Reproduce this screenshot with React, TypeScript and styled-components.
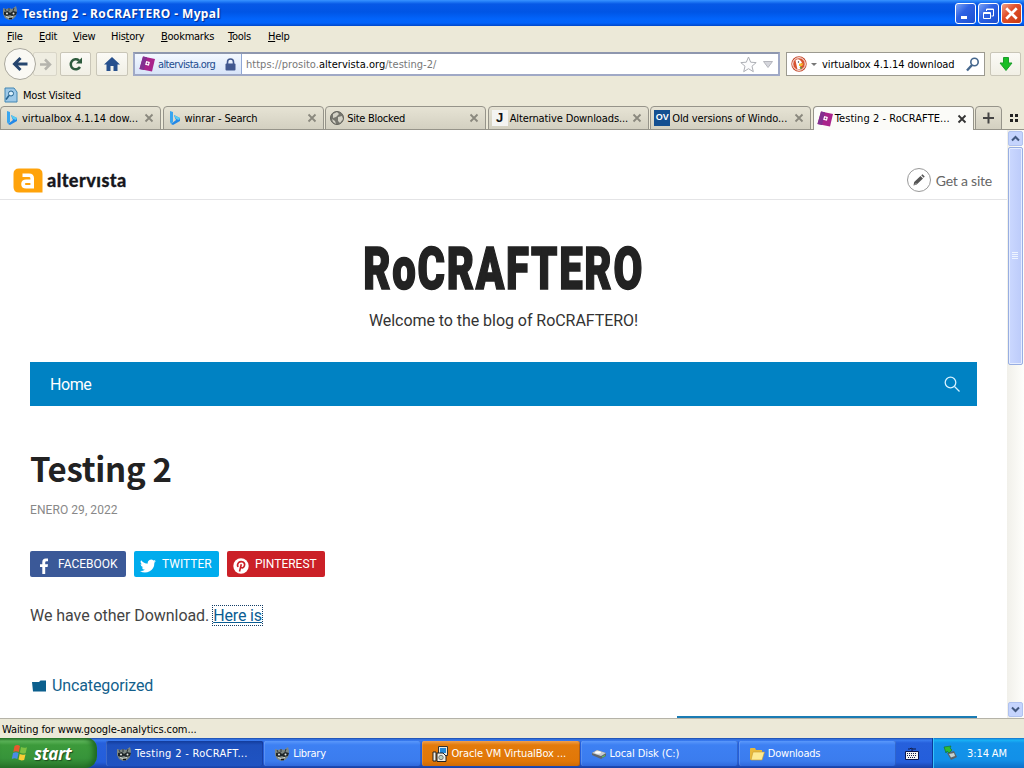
import { FunctionComponent, ReactNode } from "react";
import styled, { createGlobalStyle, css } from "styled-components";

const GlobalStyle = createGlobalStyle`
  * { box-sizing: border-box; }
  body {
    margin: 0;
    overflow: hidden;
    background: #fff;
  }
  svg { display: block; flex: none; }
`;

const Screen = styled.div`
  width: 1024px;
  height: 768px;
  display: flex;
  flex-direction: column;
  overflow: hidden;
  font-family: "DejaVu Sans Condensed", "DejaVu Sans", sans-serif;
  font-stretch: condensed;
  font-size: 11px;
  color: #000;
`;

const Label = styled.span<{ spacing?: number }>`
  white-space: nowrap;
  letter-spacing: ${(props) => props.spacing ?? -0.3}px;
`;

/* ---------- window chrome ---------- */

const TitleBar = styled.div`
  flex: none;
  height: 26px;
  padding: 0 2px 0 2px;
  display: flex;
  align-items: center;
  background: linear-gradient(#3a93ff 0, #2a86fb 1px, #0759e6 4px, #0055e5 12px, #0264fb 19px, #0263fa 23px, #0047c9 26px);
`;

const WindowTitle = styled.div`
  flex: 1;
  margin-left: 4px;
  font: bold 12px "Noto Sans", sans-serif;
  letter-spacing: 0.38px;
  white-space: nowrap;
  color: #fff;
  text-shadow: 1px 1px 1px #0b2b8c;
`;

const WindowButtons = styled.div`
  display: flex;
  gap: 2px;
`;

const WindowButton = styled.div<{ close?: boolean }>`
  width: 21px;
  height: 21px;
  display: flex;
  align-items: center;
  justify-content: center;
  border: 1px solid #fff;
  border-radius: 3px;
  background: ${(props) =>
    props.close
      ? "linear-gradient(135deg, #f0a38a, #e2502c 40%, #c63a12)"
      : "linear-gradient(135deg, #7ba3f5, #2e62e4 40%, #1c4fd0)"};
`;

const MenuBar = styled.div`
  flex: none;
  height: 21px;
  padding: 0 7px;
  display: flex;
  align-items: center;
  background: #ece9d8;
`;

const MenuItem = styled.div<{ width: number }>`
  width: ${(props) => props.width}px;
  white-space: nowrap;
  letter-spacing: -0.25px;
`;

const NavBar = styled.div`
  flex: none;
  height: 37px;
  padding: 0 2px 3px 4px;
  display: flex;
  align-items: center;
  background: #ece9d8;
`;

const BackButton = styled.div`
  z-index: 1;
  width: 32px;
  height: 32px;
  display: flex;
  align-items: center;
  justify-content: center;
  border: 1px solid #aaa89d;
  border-radius: 50%;
  background: #faf9f4;
`;

const ToolButton = styled.div<{ width: number; left?: number; faded?: boolean }>`
  width: ${(props) => props.width}px;
  height: 24px;
  margin-left: ${(props) => props.left ?? 0}px;
  display: flex;
  align-items: center;
  justify-content: center;
  border: 1px solid ${(props) => (props.faded ? "#d9d6c8" : "#c9c6b8")};
  border-radius: 2px;
  background: ${(props) => (props.faded ? "#efede1" : "linear-gradient(#fbfaf6, #f1efe5)")};
`;

const UrlBar = styled.div`
  width: 647px;
  height: 24px;
  margin-left: 5px;
  display: flex;
  align-items: center;
  border: 2px solid #a0a9c6;
  border-top-color: #8e97ae;
  background: #fff;
`;

const Identity = styled.div`
  width: 107px;
  height: 20px;
  padding-left: 4px;
  display: flex;
  align-items: center;
  border-right: 1px solid #8fa6d4;
  background: linear-gradient(#f3f8ff, #d8e4f8);
  color: #1d4c8f;
`;

const IdentityText = styled(Label)`
  flex: 1;
  margin-left: 3px;
`;

const LockIcon = styled.svg`
  margin-right: 5px;
`;

const Address = styled.div`
  flex: 1;
  padding: 1px 0 0 4px;
  white-space: nowrap;
  letter-spacing: 0.03px;
  color: #777;
  b {
    font-weight: normal;
    color: #000;
  }
`;

const SearchBox = styled.div`
  width: 199px;
  height: 24px;
  margin: 0 5px 0 6px;
  padding: 0 4px 0 4px;
  display: flex;
  align-items: center;
  border: 1px solid #9c9a90;
  background: #fff;
`;

const Query = styled(Label)`
  flex: 1;
  padding-top: 1px;
`;

const BookmarksBar = styled.div`
  flex: none;
  height: 22px;
  padding-left: 4px;
  display: flex;
  align-items: center;
  gap: 4px;
  background: #ece9d8;
`;

const TabStrip = styled.div`
  flex: none;
  height: 24px;
  display: flex;
  gap: 1.6px;
  background: #ece9d8;
  border-bottom: 1px solid #96948a;
`;

const TabBox = styled.div<{ active?: boolean; width?: number }>`
  width: ${(props) => props.width ?? 161}px;
  height: 24px;
  padding: 0 6px 0 3px;
  display: flex;
  align-items: center;
  border: 1px solid #96948a;
  border-bottom: 0;
  border-radius: 4px 4px 0 0;
  ${(props) =>
    props.active
      ? css`
          background: #fbfbf8;
        `
      : css`
          background: linear-gradient(#e6e3d4, #d3d0c1);
          border-bottom: 1px solid #96948a;
        `}
`;

const TabText = styled(Label)`
  flex: 1;
  margin-left: 2px;
`;

/* ---------- web page ---------- */

const Viewport = styled.div`
  flex: none;
  height: 588px;
  display: flex;
  background: #fff;
`;

const Page = styled.div`
  width: 1007px;
  height: 588px;
  display: flex;
  flex-direction: column;
  overflow: hidden;
  font-family: Roboto, sans-serif;
  font-stretch: normal;
`;

const HostBar = styled.div`
  flex: none;
  height: 70px;
  padding: 31px 15px 0 13px;
  display: flex;
  align-items: center;
  border-bottom: 1px solid #e4e4e6;
`;

const HostName = styled.div`
  flex: 1;
  margin-left: 4px;
  font: 900 18px Lato, sans-serif;
  letter-spacing: 0.45px;
  color: #17171c;
  -webkit-text-stroke: 0.3px #17171c;
`;

const PencilRing = styled.div`
  width: 24px;
  height: 24px;
  display: flex;
  align-items: center;
  justify-content: center;
  border: 1px solid #999;
  border-radius: 50%;
`;

const GetSite = styled.div`
  margin: 1px 0 0 5px;
  font: 14px Lato, sans-serif;
  letter-spacing: -0.22px;
  white-space: nowrap;
  color: #666;
`;

const SiteHeader = styled.header`
  flex: none;
  height: 162px;
  padding-top: 34px;
  display: flex;
  flex-direction: column;
  align-items: center;
`;

const SiteTitle = styled.h1`
  margin: 0;
  font: 900 59px/70px Roboto, sans-serif;
  transform: scaleX(0.71);
  letter-spacing: 2.4px;
  -webkit-text-stroke: 1.6px #222;
  white-space: nowrap;
  color: #222;
`;

const Tagline = styled.div`
  margin-top: 5px;
  font-size: 16px;
  line-height: 24px;
  letter-spacing: -0.05px;
  color: #333;
`;

const SiteNav = styled.nav`
  flex: none;
  height: 44px;
  margin: 0 30px;
  padding: 0 17px 0 20px;
  display: flex;
  align-items: center;
  justify-content: space-between;
  background: #0082c3;
  color: #fff;
  font-size: 16px;
  letter-spacing: -0.4px;
`;

const Article = styled.article`
  flex: 1;
  padding: 36px 30px 0;
`;

const PostTitle = styled.h2`
  margin: 0;
  font: bold 33px/52px "Noto Sans CJK SC", sans-serif;
  letter-spacing: -0.3px;
  color: #222;
`;

const PostDate = styled.div`
  margin-top: 7px;
  font-size: 12px;
  line-height: 18px;
  letter-spacing: 0.07px;
  color: #888;
`;

const ShareRow = styled.div`
  margin-top: 32px;
  display: flex;
  gap: 8px;
`;

const ShareButton = styled.div<{ color: string; width: number }>`
  width: ${(props) => props.width}px;
  height: 26px;
  padding-left: 6px;
  display: flex;
  align-items: center;
  gap: 6px;
  border-radius: 2px;
  background: ${(props) => props.color};
  color: #fff;
  font-size: 12px;
  svg { margin-top: 3px; }
`;

const Paragraph = styled.p`
  margin: 27px 0 0;
  font-size: 16px;
  line-height: 24px;
  letter-spacing: -0.05px;
  color: #444;
  a {
    color: #0a5c92;
    text-decoration: underline;
    outline: 1px dotted #123c66;
    letter-spacing: -0.15px;
  }
`;

const Category = styled.div`
  margin: 46px 0 0 2px;
  display: flex;
  align-items: center;
  gap: 5px;
  font-size: 16px;
  line-height: 24px;
  letter-spacing: -0.12px;
  color: #135f8c;
`;

const WidgetEdge = styled.div`
  flex: none;
  width: 300px;
  height: 2px;
  margin-left: 677px;
  background: #1a7cb4;
`;

const ScrollTrack = styled.div`
  width: 17px;
  padding: 1px;
  display: flex;
  flex-direction: column;
  background: linear-gradient(90deg, #f1f0ea, #fefefb);
`;

const ScrollButton = styled.div`
  width: 15px;
  height: 15px;
  display: flex;
  align-items: center;
  justify-content: center;
  border: 1px solid #b0c2ef;
  border-radius: 2px;
  background: #c5d4fd;
`;

const ScrollThumb = styled.div`
  width: 15px;
  height: 218px;
  margin: 1px 0 auto;
  display: flex;
  align-items: center;
  justify-content: center;
  border: 1px solid #98aee2;
  border-radius: 2px;
  box-shadow: inset 0 0 0 1px #e6edff;
  background: linear-gradient(90deg, #cbd8ff, #bccbfa);
`;

/* ---------- status bar and taskbar ---------- */

const StatusBar = styled.div`
  flex: none;
  height: 20px;
  padding: 1px 2px 0;
  display: flex;
  align-items: center;
  border-top: 1px solid #b5b3a8;
  background: #ece9d8;
`;

const Taskbar = styled.div`
  flex: none;
  height: 30px;
  display: flex;
  align-items: stretch;
  color: #fff;
  background: linear-gradient(#1b4aa8 0, #3a7cf0 2px, #2660dc 5px, #245edb 24px, #1941a5 30px);
`;

const StartButton = styled.div`
  width: 97px;
  padding-left: 11px;
  display: flex;
  align-items: center;
  gap: 5px;
  border-radius: 0 10px 12px 0;
  background: linear-gradient(#2b7a2c 0, #5eb75b 3px, #3c9a3b 7px, #37943a 20px, #2a752b 30px);
  box-shadow: inset -4px 0 5px #1f6a22;
  font: italic bold 17px "Open Sans", sans-serif;
  letter-spacing: -0.4px;
  text-shadow: 1px 1px 1px #1c4a1d;
`;

const Tasks = styled.div`
  width: 790px;
  margin-left: 9px;
  padding: 3px 0 2px;
  display: flex;
  gap: 1px;
`;

const taskFill = {
  normal: "linear-gradient(#5a98fb, #3d80f3 4px, #3b7cee 20px, #3069dc)",
  active: "linear-gradient(#123c9c, #1e50bc 4px, #1f53c2)",
  alert: "linear-gradient(#f0a04c, #e37b0c 4px, #e17707 20px, #cf6a05)",
};

const TaskButton = styled.div<{ kind: keyof typeof taskFill }>`
  width: 157.2px;
  padding-left: 10px;
  display: flex;
  align-items: center;
  gap: 3px;
  border-radius: 2px;
  background: ${(props) => taskFill[props.kind]};
  box-shadow: inset 1px 0 0 rgba(255, 255, 255, 0.15), inset -1px 0 0 rgba(0, 0, 60, 0.2);
`;

const LanguageBar = styled.div`
  width: 36px;
  padding-right: 4px;
  display: flex;
  align-items: center;
  justify-content: center;
`;

const Tray = styled.div`
  flex: 1;
  padding-left: 10px;
  display: flex;
  align-items: center;
  gap: 9px;
  border-left: 1px solid #0b3a9a;
  background: linear-gradient(#1570c8 0, #19b3f5 2px, #1294ea 5px, #1290e8 22px, #0d6fc8 30px);
  box-shadow: inset 1px 0 0 #38c4fa;
`;

/* ---------- icons ---------- */

const Raccoon = () => (
  <svg width="16" height="16" viewBox="0 0 16 16">
    <path d="M1 3l3 1 3-1 3 1 4-3 1 4-1 6-3 3-4 1-4-2-2-4z" fill="#7d8783" />
    <path d="M2 7l4-1 2 2 3-2 4 1-1 3-4 1-2-1-3 1-3-1z" fill="#20272a" />
    <path d="M3 4l1 2M7 3v3M12 3l-1 3" stroke="#2f373a" />
    <circle cx="5" cy="8.5" r="1" fill="#e4e8e4" />
    <circle cx="11.500" cy="8.500" r="1" fill="#e4e8e4" />
    <path d="M4 11.500l3 1 4-1" stroke="#d5dbd5" fill="none" />
    <path d="M7 13.500h3" stroke="#111" strokeWidth="1.500" />
  </svg>
);

const Alter = () => (
  <svg width="16" height="16" viewBox="0 0 16 16">
    <path d="M4 .5l12 2.500-3 12.500L.5 13z" fill="#a9238b" />
    <path d="M4 .5l4 .8L5 14 .5 13z" fill="#823090" />
    <path d="M7.200 5l3.700 1-1 3.800-3.800-1z" fill="#fff" />
    <circle cx="8.500" cy="7.400" r=".8" fill="#93308a" />
  </svg>
);

const Bing = () => (
  <svg width="16" height="16" viewBox="0 0 16 16">
    <path d="M3 1l3 1v10l-2 2-1-2z" fill="#38a5ef" />
    <path d="M7 5l6 3v3l-7 4-2-1 5-4-1-2z" fill="#2188e8" />
    <path d="M7 5l6 3-1 2-3-1z" fill="#59cdf1" />
  </svg>
);

const Globe = () => (
  <svg width="16" height="16" viewBox="0 0 16 16">
    <circle cx="8" cy="8" r="6.5" fill="#77776f" stroke="#62625b" />
    <path d="M4 4l4-2 2 2-3 3-3 1zM9 7l4-1 1 3-3 4-2-2zM3 9l3 2 1 3-3-2z" fill="#d4d2c6" />
  </svg>
);

const LetterIcon = styled.div<{ blue?: boolean }>`
  width: 16px;
  height: 16px;
  flex: none;
  text-align: center;
  background: ${(props) => (props.blue ? "#134f91" : "#f4f4f2")};
  color: ${(props) => (props.blue ? "#fff" : "#111")};
  font: bold ${(props) => (props.blue ? 9 : 13)}px/15px "Liberation Sans", sans-serif;
`;

const Cross: FunctionComponent<{ color: string; size?: number }> = ({ color, size = 10 }) => (
  <svg width={size} height={size} viewBox="0 0 10 10">
    <path d="M1.5 1.5l7 7M8.5 1.5l-7 7" stroke={color} strokeWidth="1.8" />
  </svg>
);

const Magnifier = () => (
  <svg width="15" height="15" viewBox="0 0 15 15" fill="none">
    <circle cx="9.5" cy="5" r="3.7" stroke="#45678d" strokeWidth="1.6" />
    <path d="M7 8l-5 5.5" stroke="#45678d" strokeWidth="2.4" />
  </svg>
);

const Duck = () => (
  <svg width="16" height="16" viewBox="0 0 16 16">
    <circle cx="8" cy="8" r="7.7" fill="#c54a2c" />
    <circle cx="8" cy="8" r="6.3" fill="#d85331" stroke="#fff" />
    <path d="M4.500 4.500q2-2 4.500-.5l2 2.500-2 2 .5 4.500-3 .5z" fill="#fff" />
    <path d="M8 7.500h4.500l-1.500 2.500H8z" fill="#f8b92a" />
    <path d="M8.500 11l3 .5-2 1.500z" fill="#49a942" />
    <circle cx="7.500" cy="6" r="0.7" fill="#234" />
  </svg>
);

const Chevron: FunctionComponent<{ down?: boolean }> = ({ down }) => (
  <svg width="9" height="7" viewBox="0 0 9 7">
    <path d={down ? "M1 1.5L4.5 5 8 1.5" : "M1 5.5L4.5 2 8 5.5"} fill="none" stroke="#42587f" strokeWidth="2" />
  </svg>
);

const Flag = () => (
  <svg width="18" height="18" viewBox="0 0 18 18">
    <path d="M3.500 2q3-1.800 5.500 0L7.800 8q-3-1.500-5.500 0z" fill="#e8582e" />
    <path d="M10 3q3 1.500 6 .3L14.700 9q-3 1.200-5.800-.4z" fill="#7cc142" />
    <path d="M2 9q3-1.500 5.500 0L6.300 15q-2.800-1.600-5.500 0z" fill="#4b8be6" />
    <path d="M8.700 10q3 1.500 5.800.3L13.200 16q-3 1-5.700-.4z" fill="#f8cd35" />
  </svg>
);

const Installer = () => (
  <svg width="16" height="16" viewBox="0 0 16 16">
    <path d="M6.500 .500h9v9h-9z" fill="#e8e8e0" stroke="#333" />
    <path d="M8 2h6v5H8z" fill="#2389d8" />
    <path d="M1 6h3v9H1z" fill="#f5f3e8" stroke="#222" />
    <path d="M5 7h6l3 3v5.500H5z" fill="#f2f0e5" stroke="#222" />
    <circle cx="9" cy="11.500" r="2.200" fill="#b9d1bd" stroke="#777" />
  </svg>
);

const Disk = () => (
  <svg width="16" height="16" viewBox="0 0 16 16">
    <path d="M1 7l5-3 9 3v3l-5 3-9-4z" fill="#5f666f" />
    <path d="M1 7l5-3 9 3-5 3z" fill="#c9cdd2" />
    <ellipse cx="7" cy="6.500" rx="3" ry="1.300" fill="#fff" />
    <path d="M11 11l3-1.500" stroke="#5ad15c" />
  </svg>
);

const Folder = () => (
  <svg width="16" height="16" viewBox="0 0 16 16">
    <path d="M1 3q0-1 1-1h4l1 2h6v10H2q-1 0-1-1z" fill="#e8b93c" />
    <path d="M4 6h11.500L13 14H2z" fill="#fdea93" stroke="#c99a2c" strokeWidth=".6" />
  </svg>
);

const Keyboard = () => (
  <svg width="14" height="13" viewBox="0 0 14 13">
    <path d="M3 2h2l1-1 2 1h3M7 2v3" stroke="#111a44" fill="none" />
    <path d="M.5 4.500h13v8H.5z" fill="#f4f4f4" stroke="#0a154d" />
    <path d="M2 6.500h10M2 8.500h10M3 10.500h8" stroke="#17204f" strokeDasharray="1 1" />
  </svg>
);

const TrayDevice = () => (
  <svg width="15" height="16" viewBox="0 0 15 16">
    <path d="M4 8l7-2 3 6-6 3z" fill="#59636a" />
    <path d="M6 9l5-1 1 3-4 1.500z" fill="#c7d1d0" />
    <path d="M1 2l7-1-1 2 2 2-3 3-2-2-1 2z" fill="#2ebc30" stroke="#176d25" strokeWidth=".6" />
  </svg>
);

interface TabProps {
  icon: ReactNode;
  title: string;
  active?: boolean;
  spacing?: number;
}

const Tab: FunctionComponent<TabProps> = ({ icon, title, active, spacing }) => (
  <TabBox active={active}>
    {icon}
    <TabText spacing={spacing}>{title}</TabText>
    <Cross color={active ? "#333" : "#8a887e"} />
  </TabBox>
);

const menus = [
  ["File", 32],
  ["Edit", 34],
  ["View", 38],
  ["History", 50, 3],
  ["Bookmarks", 67],
  ["Tools", 40],
  ["Help", 40],
] as [string, number, number?][];

const BrowserChrome = () => (
  <>
    <TitleBar>
      <Raccoon />
      <WindowTitle>Testing 2 - RoCRAFTERO - Mypal</WindowTitle>
      <WindowButtons>
        <WindowButton>
          <svg width="15" height="15"><path d="M3 10h6v3H3z" fill="#fff" /></svg>
        </WindowButton>
        <WindowButton>
          <svg width="15" height="15" fill="none" stroke="#fff">
            <path d="M5.500 5V3h7v7h-2M5 3.500h8" />
            <path d="M2.500 6.500h7v6h-7zM2 7.500h8" />
          </svg>
        </WindowButton>
        <WindowButton close>
          <Cross color="#fff" size={15} />
        </WindowButton>
      </WindowButtons>
    </TitleBar>
    <MenuBar>
      {menus.map(([name, width, key = 0]) => (
        <MenuItem key={name} width={width}>
          {name.slice(0, key)}
          <u>{name[key]}</u>
          {name.slice(key + 1)}
        </MenuItem>
      ))}
    </MenuBar>
    <NavBar>
      <BackButton>
        <svg width="16" height="16" fill="none" stroke="#26466f" strokeWidth="3">
          <path d="M8.500 2L2.500 8l6 6M3 8h12.500" />
        </svg>
      </BackButton>
      <ToolButton width={24} left={-3} faded>
        <svg width="13" height="13" fill="none" stroke="#b5b4ad" strokeWidth="2.500">
          <path d="M6 1.500l5 5-5 5M1 6.500h9" />
        </svg>
      </ToolButton>
      <ToolButton width={31} left={3}>
        <svg width="15" height="15" fill="none">
          <path d="M11 3.500A5 5 0 1 0 12 10" stroke="#2d5a3c" strokeWidth="2.500" />
          <path d="M8 6.500h6V.500z" fill="#2d5a3c" />
        </svg>
      </ToolButton>
      <ToolButton width={32} left={5}>
        <svg width="16" height="14" viewBox="0 0 16 14">
          <path d="M8 0l8 7.500h-2.500V14H9.500V9h-3v5H2.500V7.500H0z" fill="#27508d" />
        </svg>
      </ToolButton>
      <UrlBar>
        <Identity>
          <Alter />
          <IdentityText spacing={-0.62}>altervista.org</IdentityText>
          <LockIcon width="11" height="13" viewBox="0 0 11 13">
            <path d="M2.500 6V4q0-3 3-3t3 3v2" fill="none" stroke="#42588f" strokeWidth="1.600" />
            <rect x=".5" y="5.500" width="10" height="7" rx="1" fill="#42588f" />
          </LockIcon>
        </Identity>
        <Address>
          https://prosito.<b>altervista.org</b>/testing-2/
        </Address>
        <svg width="17" height="17" viewBox="0 0 17 17">
          <path d="M8.500 1l2.200 5.200 5.500.4-4.200 3.600 1.300 5.500-4.800-3-4.800 3L5 10.200.8 6.600l5.500-.4z" fill="#fcfcfd" stroke="#adafb5" />
        </svg>
        <svg width="21" height="9"><path d="M6.500 1.500h9L11 7.500z" fill="#d5d6dc" stroke="#b5b6bd" /></svg>
      </UrlBar>
      <SearchBox>
        <Duck />
        <svg width="15" height="5"><path d="M4 1h6L7 4z" fill="#777" /></svg>
        <Query spacing={-0.1}>virtualbox 4.1.14 download</Query>
        <Magnifier />
      </SearchBox>
      <ToolButton width={31}>
        <svg width="14" height="14"><path d="M4.500.500h5V6H13l-6 7.500L1 6h3.500z" fill="#18be25" stroke="#1a9d2b" /></svg>
      </ToolButton>
    </NavBar>
    <BookmarksBar>
      <svg width="15" height="16" viewBox="0 0 15 16">
        <path d="M1 1h9l3 4v10H1z" fill="#9dc9e8" stroke="#4386b2" />
        <circle cx="7" cy="6.500" r="2.500" fill="#d9effb" stroke="#24638f" />
        <path d="M5 8.500l-3 4" stroke="#24638f" strokeWidth="1.500" />
      </svg>
      <Label spacing={-0.2}>Most Visited</Label>
    </BookmarksBar>
    <TabStrip>
      <Tab icon={<Bing />} title="virtualbox 4.1.14 dow..." spacing={0} />
      <Tab icon={<Bing />} title="winrar - Search" spacing={-0.15} />
      <Tab icon={<Globe />} title="Site Blocked" spacing={-0.25} />
      <Tab icon={<LetterIcon>J</LetterIcon>} title="Alternative Downloads..." spacing={-0.12} />
      <Tab icon={<LetterIcon blue>OV</LetterIcon>} title="Old versions of Windo..." spacing={-0.1} />
      <Tab icon={<Alter />} title="Testing 2 - RoCRAFTE..." spacing={0.05} active />
      <TabBox width={27}>
        <svg width="18" height="12"><path d="M4 6h11M9.500 .500v11" stroke="#444" strokeWidth="2" /></svg>
      </TabBox>
      <svg width="20" height="24" fill="#222">
        <path d="M6 8h3v3H6zM11 8h3v3h-3zM6 13h3v3H6zM11 13h3v3h-3z" />
      </svg>
    </TabStrip>
  </>
);

const WebPage = () => (
  <Viewport>
    <Page>
      <HostBar>
        <svg width="30" height="25" viewBox="0 0 30 25">
          <path d="M6 .5h18q5.500 0 5.500 5.500v18.500H6Q.5 24.500.5 19V6Q.5.500 6 .500z" fill="#ffa30b" />
          <path d="M9.500 7.300h6.500q3.200 0 3.200 3v8.400h-6q-3.200 0-3.200-2.700t3.200-2.700h6" fill="none" stroke="#fff" strokeWidth="3.600" />
        </svg>
        <HostName>altervısta</HostName>
        <PencilRing>
          <svg width="12" height="12" viewBox="0 0 12 12">
            <path d="M.5 11.500L1.200 8l6.300-6L10 4.500l-6.300 6zM8.200 1.300L9.500.300l2.200 2.200-1 1.200z" fill="#555" />
            <path d="M2 10.500l1-1" stroke="#fff" />
          </svg>
        </PencilRing>
        <GetSite>Get a site</GetSite>
      </HostBar>
      <SiteHeader>
        <SiteTitle>RoCRAFTERO</SiteTitle>
        <Tagline>Welcome to the blog of RoCRAFTERO!</Tagline>
      </SiteHeader>
      <SiteNav>
        <span>Home</span>
        <svg width="16" height="16" viewBox="0 0 16 16" fill="none" stroke="#d5f1ff" strokeWidth="1.300">
          <circle cx="6.500" cy="6.500" r="5.300" />
          <path d="M10.500 10.500l5 5" />
        </svg>
      </SiteNav>
      <Article>
        <PostTitle>Testing 2</PostTitle>
        <PostDate>ENERO 29, 2022</PostDate>
        <ShareRow>
          <ShareButton color="#3b5998" width={96}>
            <svg width="16" height="16" viewBox="0 0 16 16">
              <path d="M6.300 16V9H4V6.300h2.300V4.200Q6.300.500 9.800.500H12V3.200h-1.500q-1.300 0-1.300 1.300v1.800H12L11.600 9H9.200v7z" fill="#fff" />
            </svg>
            FACEBOOK
          </ShareButton>
          <ShareButton color="#00aced" width={85}>
            <svg width="16" height="16" viewBox="0 0 24 24">
              <path d="M24 4.600a10 10 0 0 1-2.800.8 5 5 0 0 0 2.100-2.700 10 10 0 0 1-3.100 1.200 4.900 4.900 0 0 0-8.400 4.500A14 14 0 0 1 1.700 3.200a4.900 4.900 0 0 0 1.500 6.500 5 5 0 0 1-2.200-.6 4.900 4.900 0 0 0 3.900 4.900 5 5 0 0 1-2.200.1 4.900 4.900 0 0 0 4.600 3.400A9.900 9.900 0 0 1 0 19.500 14 14 0 0 0 21.500 7a10 10 0 0 0 2.500-2.400z" fill="#fff" />
            </svg>
            TWITTER
          </ShareButton>
          <ShareButton color="#cb2027" width={98}>
            <svg width="16" height="16" viewBox="0 0 16 16">
              <circle cx="8" cy="8" r="7.700" fill="#fff" />
              <path d="M5 9Q3.800 6.500 5.500 4.700q2-1.700 4.600-.7 2.300 1.400 1.200 4.200-1.300 2.500-3.300 1.200M8.300 6.200L6.500 13.500" fill="none" stroke="#cb2027" strokeWidth="1.600" />
            </svg>
            PINTEREST
          </ShareButton>
        </ShareRow>
        <Paragraph>
          We have other Download. <a>Here is</a>
        </Paragraph>
        <Category>
          <svg width="15" height="12" viewBox="0 0 15 12">
            <path d="M0 2h7l1.500-1.500H14V11.500H1z" fill="#0b5f8d" />
          </svg>
          Uncategorized
        </Category>
      </Article>
      <WidgetEdge />
    </Page>
    <ScrollTrack>
      <ScrollButton><Chevron /></ScrollButton>
      <ScrollThumb>
        <svg width="7" height="8"><path d="M0 .500h6M0 2.500h6M0 4.500h6M0 6.500h6" stroke="#eef4ff" /></svg>
      </ScrollThumb>
      <ScrollButton><Chevron down /></ScrollButton>
    </ScrollTrack>
  </Viewport>
);

const App = () => (
  <Screen>
    <GlobalStyle />
    <BrowserChrome />
    <WebPage />
    <StatusBar>
      <Label spacing={-0.1}>Waiting for www.google-analytics.com...</Label>
    </StatusBar>
    <Taskbar>
      <StartButton>
        <Flag />
        start
      </StartButton>
      <Tasks>
        <TaskButton kind="active"><Raccoon /><Label spacing={0.3}>Testing 2 - RoCRAFT...</Label></TaskButton>
        <TaskButton kind="normal"><Raccoon /><Label>Library</Label></TaskButton>
        <TaskButton kind="alert"><Installer /><Label spacing={-0.1}>Oracle VM VirtualBox ...</Label></TaskButton>
        <TaskButton kind="normal"><Disk /><Label spacing={-0.1}>Local Disk (C:)</Label></TaskButton>
        <TaskButton kind="normal"><Folder /><Label spacing={-0.2}>Downloads</Label></TaskButton>
      </Tasks>
      <LanguageBar><Keyboard /></LanguageBar>
      <Tray>
        <TrayDevice />
        <Label spacing={-0.1}>3:14 AM</Label>
      </Tray>
    </Taskbar>
  </Screen>
);

export default App;
